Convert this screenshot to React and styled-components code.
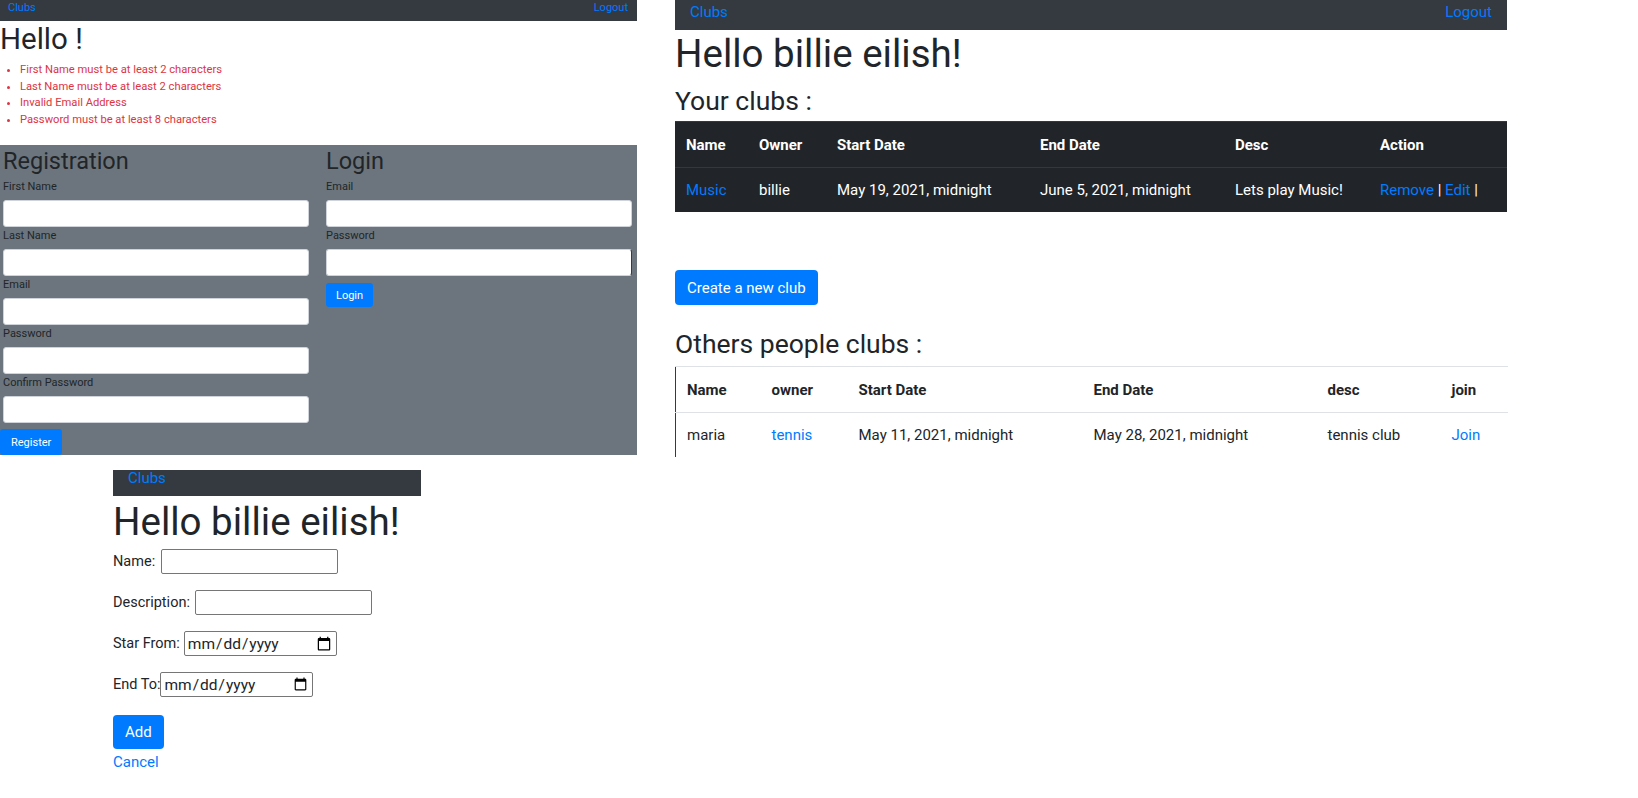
import React from 'react'
import styled, { createGlobalStyle } from 'styled-components'

const Global = createGlobalStyle`
  body {
    margin: 0;
    background: #fff;
    font-family: Roboto, "Liberation Sans", sans-serif;
    color: #212529;
  }
`

const Canvas = styled.div`
  display: grid;
  grid-template-columns: 637px 832px;
  column-gap: 38px;
  align-items: start;
  width: 1638px;
  height: 798px;
  overflow: hidden;
`

const LeftColumn = styled.div`
  display: flex;
  flex-direction: column;
`

const Shot = styled.section`
  width: ${p => p.$w}px;
  margin: ${p => p.$m || '0'};
`

const TopBar = styled.nav`
  display: flex;
  justify-content: space-between;
  align-items: flex-start;
  box-sizing: border-box;
  height: ${p => p.$h}px;
  padding: 0 ${p => p.$pr}px 0 ${p => p.$pl}px;
  background: #343a40;
`

const BarLink = styled.a`
  color: #007bff;
  font-size: ${p => p.$size}px;
  line-height: ${p => p.$lh}px;
  text-decoration: none;
`

const Title = styled.h1`
  margin: ${p => p.$mt}px 0 0 ${p => p.$ml || 0}px;
  font-size: ${p => p.$size}px;
  line-height: ${p => p.$lh}px;
  font-weight: 400;
  color: #212529;
`

const SubTitle = styled.h3`
  margin: ${p => p.$mt}px 0 ${p => p.$mb}px;
  font-size: 26.5px;
  line-height: 30px;
  font-weight: 400;
`

const ErrorList = styled.ul`
  margin: 4px 0 17px;
  padding-left: 20px;
  color: #dc3545;
  font-size: 11.2px;
  line-height: 16.5px;
`

const AuthBox = styled.div`
  display: grid;
  grid-template-columns: 306px 306px;
  column-gap: 17px;
  align-items: start;
  box-sizing: border-box;
  height: 310px;
  padding-left: 3px;
  background: #6c757d;
  overflow: hidden;
`

const FormColumn = styled.div`
  display: flex;
  flex-direction: column;
  align-items: flex-start;
`

const BoxHeading = styled.h2`
  margin: 2px 0 5px;
  font-size: 23.5px;
  line-height: 28px;
  font-weight: 400;
  color: #212529;
`

const FieldLabel = styled.label`
  display: block;
  margin-bottom: 6px;
  font-size: 11px;
  line-height: 14px;
  color: #212529;
`

const Field = styled.input`
  display: block;
  box-sizing: border-box;
  width: 306px;
  height: 27px;
  margin: 0 0 2px;
  padding: 0 8px;
  background: #fff;
  border: 1px solid #ced4da;
  ${p => p.$edge && 'border-right: 1px solid #343a40;'}
  border-radius: 3px;
`

const SolidButton = styled.button`
  box-sizing: border-box;
  height: ${p => p.$h}px;
  margin: ${p => p.$m || '0'};
  padding: 0 ${p => p.$px}px;
  background: #007bff;
  color: #fff;
  border: none;
  border-radius: ${p => p.$r}px;
  font-family: Roboto, "Liberation Sans", sans-serif;
  font-size: ${p => p.$size}px;
  cursor: pointer;
`

const ClubTable = styled.table`
  width: 832px;
  table-layout: fixed;
  border-collapse: collapse;
  font-size: 15px;
  line-height: 20px;
  background: ${p => (p.$dark ? '#212529' : '#fff')};
  color: ${p => (p.$dark ? '#fff' : '#212529')};
  border-top: 1px solid ${p => (p.$dark ? '#32383e' : '#dee2e6')};
  border-left: ${p => (p.$dark ? 'none' : '1px solid #343a40')};

  th {
    text-align: left;
    font-weight: 700;
    padding: 13px 11px 12px;
    border-bottom: 1px solid ${p => (p.$dark ? '#32383e' : '#dee2e6')};
  }

  td {
    padding: 12px 11px;
    white-space: nowrap;
  }
`

const Blue = styled.a`
  color: #007bff;
  text-decoration: none;
`

const AddForm = styled.form`
  display: flex;
  flex-direction: column;
  align-items: flex-start;
  gap: 16px;
  margin-top: 4px;
`

const FormRow = styled.div`
  display: flex;
  align-items: center;
  gap: ${p => p.$gap}px;
  height: 25px;
  font-size: 14.5px;
  color: #212529;
`

const PlainInput = styled.input`
  box-sizing: border-box;
  width: ${p => p.$w}px;
  height: 25px;
  padding: 1px 2px;
  border: 1px solid #767676;
  border-radius: 2px;
  background: #fff;
  font-family: Roboto, "Liberation Sans", sans-serif;
  font-size: 15.5px;
  color: #212529;
`

const CancelLink = styled.a`
  display: block;
  margin-top: 2px;
  color: #007bff;
  font-size: 15px;
  line-height: 22px;
  text-decoration: none;
`

const errors = [
  'First Name must be at least 2 characters',
  'Last Name must be at least 2 characters',
  'Invalid Email Address',
  'Password must be at least 8 characters',
]

const regFields = ['First Name', 'Last Name', 'Email', 'Password', 'Confirm Password']

const myCols = [73, 78, 203, 195, 145, 138]
const otherCols = [85, 87, 235, 234, 124, 67]

const Cols = ({ widths }) => (
  <colgroup>
    {widths.map((w, i) => <col key={i} width={w} />)}
  </colgroup>
)

const AuthPage = () => (
  <Shot $w={637}>
    <TopBar $h={21} $pl={8} $pr={9}>
      <BarLink $size={11} $lh={15}>Clubs</BarLink>
      <BarLink $size={11} $lh={15}>Logout</BarLink>
    </TopBar>
    <Title $size={29.5} $lh={37} $mt={0}>Hello !</Title>
    <ErrorList>
      {errors.map(e => <li key={e}>{e}</li>)}
    </ErrorList>
    <AuthBox>
      <FormColumn>
        <BoxHeading>Registration</BoxHeading>
        {regFields.map(f => (
          <div key={f}>
            <FieldLabel>{f}</FieldLabel>
            <Field type={f.includes('Password') ? 'password' : 'text'} />
          </div>
        ))}
        <SolidButton $h={26} $px={11} $size={11} $r={3} $m="4px 0 0 -3px">Register</SolidButton>
      </FormColumn>
      <FormColumn>
        <BoxHeading>Login</BoxHeading>
        <div>
          <FieldLabel>Email</FieldLabel>
          <Field type="text" />
        </div>
        <div>
          <FieldLabel>Password</FieldLabel>
          <Field type="password" $edge />
        </div>
        <SolidButton $h={24} $px={10} $size={11} $r={3} $m="5px 0 0">Login</SolidButton>
      </FormColumn>
    </AuthBox>
  </Shot>
)

const ClubsPage = () => (
  <Shot $w={832}>
    <TopBar $h={30} $pl={15} $pr={15}>
      <BarLink $size={15} $lh={25}>Clubs</BarLink>
      <BarLink $size={15} $lh={25}>Logout</BarLink>
    </TopBar>
    <Title $size={38.5} $lh={46} $mt={1}>Hello billie eilish!</Title>
    <SubTitle $mt={9} $mb={5}>Your clubs :</SubTitle>
    <ClubTable $dark>
      <Cols widths={myCols} />
      <thead>
        <tr>
          <th>Name</th><th>Owner</th><th>Start Date</th><th>End Date</th><th>Desc</th><th>Action</th>
        </tr>
      </thead>
      <tbody>
        <tr>
          <td><Blue>Music</Blue></td>
          <td>billie</td>
          <td>May 19, 2021, midnight</td>
          <td>June 5, 2021, midnight</td>
          <td>Lets play Music!</td>
          <td><Blue>Remove</Blue> | <Blue>Edit</Blue> |</td>
        </tr>
      </tbody>
    </ClubTable>
    <SolidButton $h={35} $px={12} $size={15} $r={4} $m="58px 0 0">Create a new club</SolidButton>
    <SubTitle $mt={24} $mb={7}>Others people clubs :</SubTitle>
    <ClubTable>
      <Cols widths={otherCols} />
      <thead>
        <tr>
          <th>Name</th><th>owner</th><th>Start Date</th><th>End Date</th><th>desc</th><th>join</th>
        </tr>
      </thead>
      <tbody>
        <tr>
          <td>maria</td>
          <td><Blue>tennis</Blue></td>
          <td>May 11, 2021, midnight</td>
          <td>May 28, 2021, midnight</td>
          <td>tennis club</td>
          <td><Blue>Join</Blue></td>
        </tr>
      </tbody>
    </ClubTable>
  </Shot>
)

const AddClubPage = () => (
  <Shot $w={308} $m="15px 0 0 113px">
    <TopBar $h={26} $pl={15} $pr={15}>
      <BarLink $size={15} $lh={16}>Clubs</BarLink>
    </TopBar>
    <Title $size={38.5} $lh={46} $mt={3}>Hello billie eilish!</Title>
    <AddForm onSubmit={e => e.preventDefault()}>
      <FormRow $gap={6}>Name:<PlainInput type="text" $w={177} /></FormRow>
      <FormRow $gap={5}>Description:<PlainInput type="text" $w={177} /></FormRow>
      <FormRow $gap={4}>Star From:<PlainInput type="date" $w={153} /></FormRow>
      <FormRow $gap={0}>End To:<PlainInput type="date" $w={153} /></FormRow>
    </AddForm>
    <SolidButton $h={34} $px={12} $size={15} $r={4} $m="18px 0 0">Add</SolidButton>
    <CancelLink>Cancel</CancelLink>
  </Shot>
)

export default function App() {
  return (
    <>
      <Global />
      <Canvas>
        <LeftColumn>
          <AuthPage />
          <AddClubPage />
        </LeftColumn>
        <ClubsPage />
      </Canvas>
    </>
  )
}
